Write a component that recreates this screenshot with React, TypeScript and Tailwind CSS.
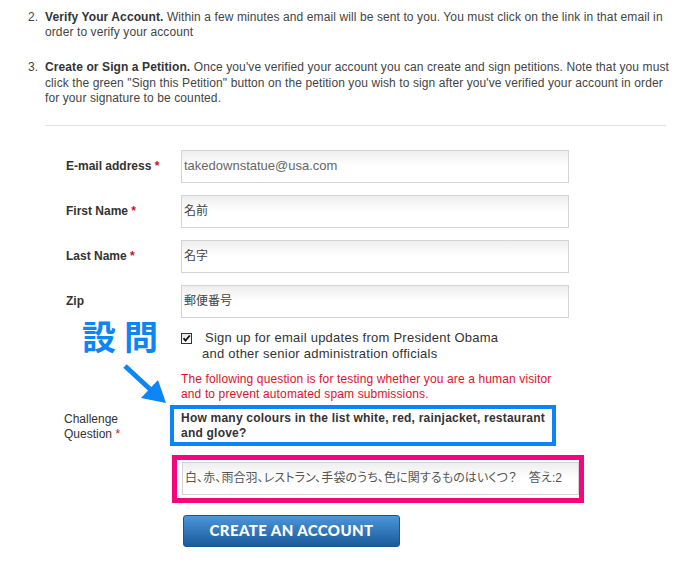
import * as React from 'react';

const FONT = "font-['Liberation_Sans','Noto_Sans_CJK_JP',sans-serif]";

interface FieldProps {
  label: string;
  value: string;
  required?: boolean;
  jp?: boolean;
}

const Field = ({ label, value, required, jp }: FieldProps) => (
  <div className="flex items-center">
    <div className="w-[115px] shrink-0 font-bold text-[12px] text-[#333]">
      {label}
      {required && <span className="text-[#c8102e]"> *</span>}
    </div>
    <div className="flex h-[33px] w-[388px] items-center border border-[#d3d3d3] bg-linear-to-b from-[#eeeeee] to-white to-50% px-[2px]">
      <span
        className={
          jp
            ? "text-[12px] text-[#444] [font-feature-settings:'palt']"
            : 'text-[13px] text-[#666]'
        }
      >
        {value}
      </span>
    </div>
  </div>
);

export default function App() {
  return (
    <div className={`relative h-[565px] w-[691px] overflow-hidden bg-white text-[12px] text-[#444] ${FONT}`}>
      <ol className="pl-[28px] pt-[10px] leading-[15px] tracking-[0.1px]">
        <li className="flex">
          <span className="w-[17px] shrink-0">2.</span>
          <p>
            <b className="text-[#333]">Verify Your Account.</b> Within a few minutes and email will be sent to you. You must click on the link in that email in
            <br />
            order to verify your account
          </p>
        </li>
        <li className="mt-[20px] flex">
          <span className="w-[17px] shrink-0">3.</span>
          <p className="leading-[15.5px]">
            <b className="text-[#333]">Create or Sign a Petition.</b> Once you've verified your account you can create and sign petitions. Note that you must
            <br />
            click the green "Sign this Petition" button on the petition you wish to sign after you've verified your account in order
            <br />
            for your signature to be counted.
          </p>
        </li>
      </ol>

      <div className="ml-[45px] mr-[25px] mt-[18px] border-t border-[#e2e2e2]" />

      <div className="ml-[66px] mt-[24px] flex flex-col gap-[12px]">
        <Field label="E-mail address" value="takedownstatue@usa.com" required />
        <Field label="First Name" value="名前" required jp />
        <Field label="Last Name" value="名字" required jp />
        <Field label="Zip" value="郵便番号" jp />

        <div className="ml-[115px] flex">
          <span className="mt-[3px] flex h-[11px] w-[11px] shrink-0 items-center justify-center border border-[#333] bg-linear-to-b from-[#e6e6e6] to-white">
            <svg width="9" height="9" viewBox="0 0 9 9">
              <path d="M1.5 4.2 L3.5 6.5 L7.8 1.5" fill="none" stroke="#111" strokeWidth="1.8" />
            </svg>
          </span>
          <p className="ml-[10px] indent-[3px] text-[13px] leading-[16px] tracking-[0.25px] text-[#333]">
            Sign up for email updates from President Obama
            <br />
            and other senior administration officials
          </p>
        </div>
      </div>

      <div className="ml-[66px] mt-[10px]">
        <p className="ml-[115px] leading-[15px] tracking-[0.13px] text-[#e0102c]">
          The following question is for testing whether you are a human visitor
          <br />
          and to prevent automated spam submissions.
        </p>

        <div className="mt-[3px] flex">
          <div className="-ml-[2px] w-[106px] shrink-0 pt-[7px] leading-[15px] text-[#333]">
            Challenge
            <br />
            Question <span className="text-[#c8102e]">*</span>
          </div>
          <div className="w-[386px] border-4 border-[#0a84f7] pb-[1px] pl-[7px] pt-[2px] font-bold leading-[15px] tracking-[0.22px] text-[#333]">
            How many colours in the list white, red, rainjacket, restaurant
            <br />
            and glove?
          </div>
        </div>

        <div className="ml-[106px] mt-[9px] w-[412px] border-[5px] border-[#f5067f] pb-[3px] pl-[5px] pt-[2px]">
          <div className="flex h-[33px] items-center border border-[#d3d3d3] bg-linear-to-b from-[#eeeeee] to-white to-50% px-[2px] text-[12px] tracking-[0.1px] text-[#555] [font-feature-settings:'palt']">
            白、赤、雨合羽、レストラン、手袋のうち、色に関するものはいくつ？　答え:2
          </div>
        </div>

        <button className="ml-[117px] mt-[12px] flex h-[32px] w-[217px] items-center justify-center rounded-[3px] border border-[#1b5590] bg-linear-to-b from-[#4b96da] to-[#1a5b9b] font-['Lato',sans-serif] text-[15px] font-black tracking-[0.4px] text-white">
          CREATE AN ACCOUNT
        </button>
      </div>

      <div className="absolute left-[82px] top-[314px] font-['Noto_Sans_CJK_JP',sans-serif] text-[34px] font-bold leading-[44px] tracking-[8px] text-[#0d86f5]">
        設問
      </div>
      <svg className="absolute left-0 top-0" width="691" height="565" viewBox="0 0 691 565">
        <line x1="125" y1="366" x2="152" y2="391" stroke="#0d86f5" strokeWidth="5" />
        <polygon points="141,398 158,380 166,403" fill="#0d86f5" />
      </svg>
    </div>
  );
}
